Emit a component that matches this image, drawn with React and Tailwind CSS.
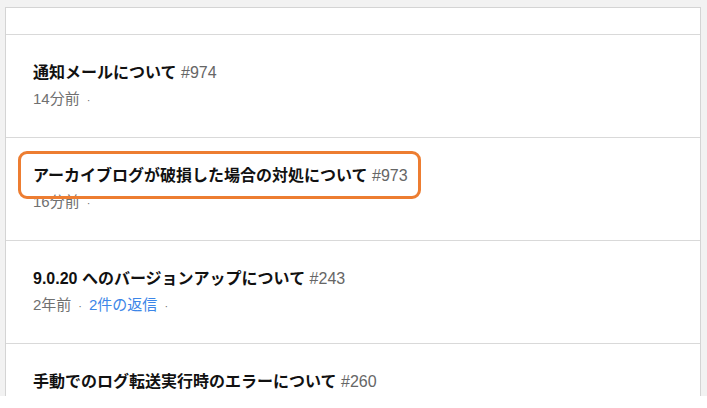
const topics = [
  { title: '通知メールについて', num: 974, time: '14分前' },
  { title: 'アーカイブログが破損した場合の対処について', num: 973, time: '16分前', marked: true },
  { title: '9.0.20 へのバージョンアップについて', num: 243, time: '2年前', replies: 2 },
  { title: '手動でのログ転送実行時のエラーについて', num: 260, time: '2年前' },
];

function Row({ topic }) {
  return (
    <div className="relative border-t border-[#d9d9d9] pl-[27px] pr-6 pt-[26px] pb-[26px]">
      <div className="text-[16px] leading-6 whitespace-nowrap">
        <span className="font-bold text-[#111]">{topic.title}</span>{' '}
        <span className="text-[#666]">#{topic.num}</span>
      </div>
      <div className="mt-[3px] text-[15px] leading-[22px] text-[#707070] whitespace-nowrap">
        {topic.time}
        <span className="mx-[7px] text-[11px]">·</span>
        {topic.replies && (
          <>
            <span className="text-[#3c86e8]">{topic.replies}件の返信</span>
            <span className="mx-[7px] text-[11px]">·</span>
          </>
        )}
      </div>
      {/* annotation box */}
      {topic.marked && (
        <div className="absolute left-[12px] top-[13px] w-[403px] h-[48px] rounded-[9px] border-[3px] border-[#ed7d31]" />
      )}
    </div>
  );
}

export default function App() {
  return (
    <div className="bg-white h-[408px]">
      <div
        className="h-[396px] overflow-hidden bg-[#f2f2f2] pt-[7px] pl-[5px] pr-[6px]"
        style={{ fontFamily: '"Liberation Sans", "Noto Sans CJK JP", sans-serif' }}
      >
        <div className="bg-white border border-[#d4d4d4] min-h-full">
          <div className="h-[26px]" />
          {topics.map((t) => (
            <Row key={t.num} topic={t} />
          ))}
        </div>
      </div>
    </div>
  );
}
